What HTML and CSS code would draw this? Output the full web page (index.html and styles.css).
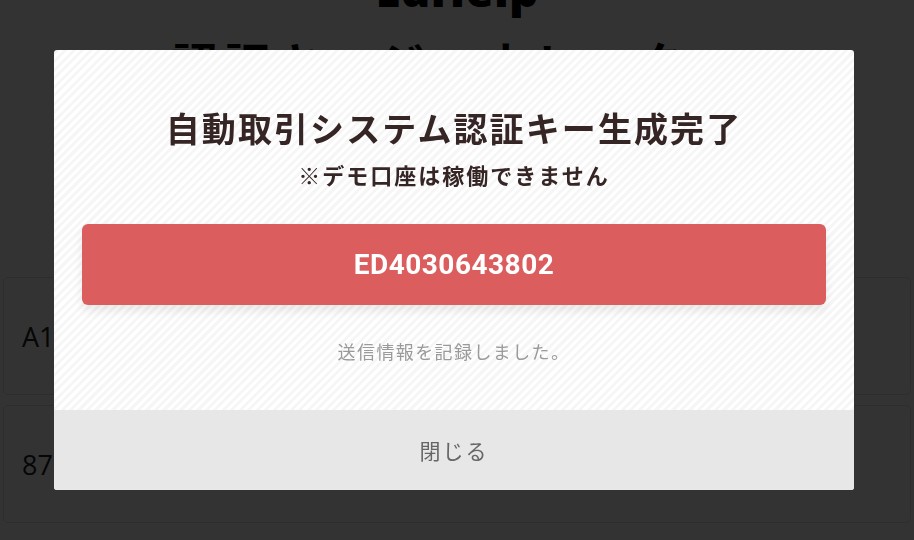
FILE: index.html
```html
<!DOCTYPE html>
<html lang="ja">
<head>
<meta charset="utf-8">
<title>認証キージェネレーター</title>
<link rel="stylesheet" href="styles.css">
</head>
<body>
<div class="page">
  <h1 class="brand">EdHelp</h1>
  <h2 class="page-title">認証キージェネレーター</h2>
  <div class="fields">
    <div class="field">A1</div>
    <div class="field">87</div>
  </div>
</div>

<div class="overlay">
  <div class="modal">
    <div class="modal-body">
      <div class="modal-title">自動取引システム認証キー生成完了</div>
      <div class="modal-sub">※デモ口座は稼働できません</div>
      <div class="key-box">ED4030643802</div>
      <div class="note">送信情報を記録しました。</div>
    </div>
    <div class="modal-footer">閉じる</div>
  </div>
</div>
</body>
</html>
```
FILE: styles.css
```css
* { box-sizing: border-box; }
html, body { margin: 0; padding: 0; }
body {
  width: 914px;
  height: 540px;
  overflow: hidden;
  background: #fff;
  font-family: "Noto Sans CJK JP", "Noto Sans", sans-serif;
}

.page {
  padding: 0 3px;
  margin-top: -36px;
}
.brand {
  margin: 0;
  text-align: center;
  font-family: "Open Sans", "Liberation Sans", sans-serif;
  font-weight: 800;
  font-size: 46px;
  line-height: 50px;
  color: #000;
}
.page-title {
  margin: 17px 0 0;
  text-align: center;
  font-weight: 700;
  font-size: 46px;
  line-height: 60px;
  letter-spacing: 6px;
  color: #000;
}
.fields {
  margin-top: 186px;
  display: flex;
  flex-direction: column;
  gap: 10px;
  width: 908px;
}
.field {
  height: 118px;
  border: 1px solid #e2e2e2;
  border-radius: 5px;
  padding: 0 18px;
  display: flex;
  align-items: center;
  font-family: "Open Sans", "Liberation Sans", sans-serif;
  font-size: 27px;
  color: #222;
}

.overlay {
  position: fixed;
  inset: 0;
  background: rgba(0, 0, 0, 0.8);
  display: flex;
  align-items: center;
  justify-content: center;
  padding-right: 6px;
}
.modal {
  width: 800px;
  height: 440px;
  border-radius: 3px;
  overflow: hidden;
  display: flex;
  flex-direction: column;
  background: repeating-linear-gradient(-45deg, #ffffff 0 3px, #f6f6f6 3px 6px);
}
.modal-body {
  flex: 1;
  padding: 56px 28px 0;
  text-align: center;
}
.modal-title {
  font-weight: 700;
  font-size: 34px;
  line-height: 44px;
  letter-spacing: 2.1px;
  color: #352525;
}
.modal-sub {
  margin-top: 9px;
  font-weight: 700;
  font-size: 22px;
  line-height: 30px;
  letter-spacing: 2px;
  color: #352525;
}
.key-box {
  margin-top: 35px;
  height: 81px;
  border-radius: 6px;
  background: #db5d5d;
  box-shadow: 0 6px 10px rgba(0, 0, 0, 0.08);
  display: flex;
  align-items: center;
  justify-content: center;
  font-family: "Roboto", "Liberation Sans", sans-serif;
  font-weight: 700;
  font-size: 28px;
  letter-spacing: 0.5px;
  color: #fff;
}
.note {
  margin-top: 34px;
  font-size: 18px;
  line-height: 24px;
  letter-spacing: 1.4px;
  color: #9a9a9a;
}
.modal-footer {
  height: 80px;
  background: #e7e7e7;
  display: flex;
  align-items: center;
  justify-content: center;
  font-size: 21px;
  letter-spacing: 2px;
  color: #666;
}
```
